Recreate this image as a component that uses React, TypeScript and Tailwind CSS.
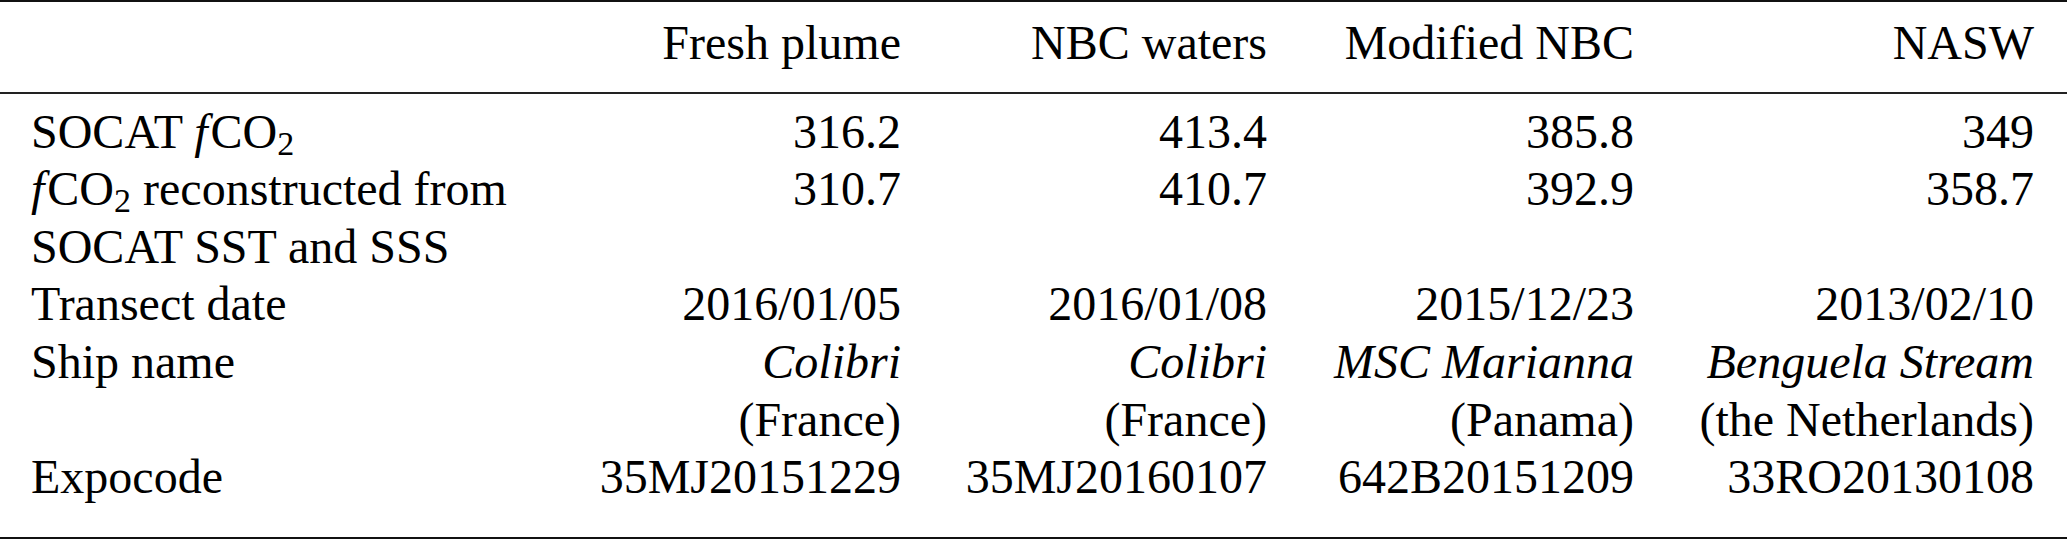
import React from "react";

const FCO2 = () => (
  <span>
    <span className="italic mr-[3px]">f</span>CO
    <span className="relative top-[7px] text-[34px] leading-none">2</span>
  </span>
);

type Cell = React.ReactNode[];

const rows: { label: Cell; cells: Cell[] }[] = [
  {
    label: [
      <span key="a">
        SOCAT <FCO2 />
      </span>,
    ],
    cells: [["316.2"], ["413.4"], ["385.8"], ["349"]],
  },
  {
    label: [
      <span key="a">
        <FCO2 /> reconstructed from
      </span>,
      "SOCAT SST and SSS",
    ],
    cells: [["310.7"], ["410.7"], ["392.9"], ["358.7"]],
  },
  {
    label: ["Transect date"],
    cells: [["2016/01/05"], ["2016/01/08"], ["2015/12/23"], ["2013/02/10"]],
  },
  {
    label: ["Ship name"],
    cells: [
      [<i key="i">Colibri</i>, "(France)"],
      [<i key="i">Colibri</i>, "(France)"],
      [<i key="i">MSC Marianna</i>, "(Panama)"],
      [<i key="i">Benguela Stream</i>, "(the Netherlands)"],
    ],
  },
  {
    label: ["Expocode"],
    cells: [["35MJ20151229"], ["35MJ20160107"], ["642B20151209"], ["33RO20130108"]],
  },
];

const headers = ["Fresh plume", "NBC waters", "Modified NBC", "NASW"];

export default function App() {
  return (
    <div className="w-[2067px] h-[540px] bg-white text-black text-[48px] leading-[57.6px] overflow-hidden font-['Liberation_Serif','Times_New_Roman',serif]">
      <div className="h-[2px] bg-[#111]" />
      <div className="grid grid-cols-[570px_360px_366px_367px_400px] pt-[12px] pb-[20px]">
        <div />
        {headers.map((h) => (
          <div key={h} className="text-right pr-[29px] whitespace-nowrap">
            {h}
          </div>
        ))}
      </div>
      <div className="h-[2px] bg-[#222]" />
      <div className="grid grid-cols-[570px_360px_366px_367px_400px] pt-[9px] pb-[31px]">
        {rows.map((r, i) => (
          <React.Fragment key={i}>
            <div className="pl-[31px] flex flex-col whitespace-nowrap">
              {r.label.map((l, j) => (
                <div key={j}>{l}</div>
              ))}
            </div>
            {r.cells.map((c, k) => (
              <div key={k} className="pr-[29px] flex flex-col items-end whitespace-nowrap">
                {c.map((l, j) => (
                  <div key={j}>{l}</div>
                ))}
              </div>
            ))}
          </React.Fragment>
        ))}
      </div>
      <div className="h-[2px] bg-[#111]" />
    </div>
  );
}
